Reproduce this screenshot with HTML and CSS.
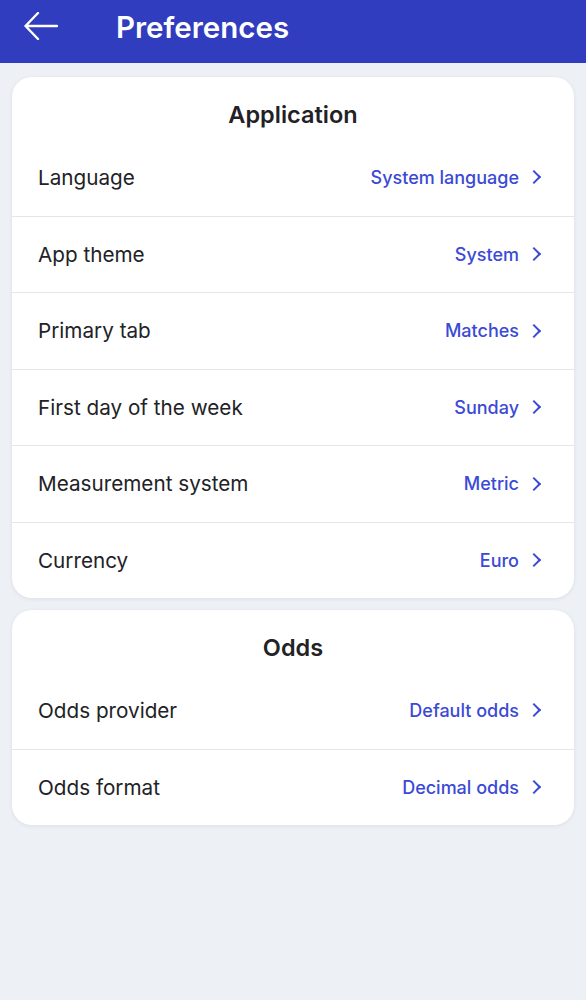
FILE: index.html
```html
<!DOCTYPE html>
<html>

<head>
  <meta charset="utf-8">
  <meta name="viewport" content="width=device-width">
  <title>Preferences</title>
  <link rel="stylesheet" href="styles.css">
</head>

<body>
  <header class="topbar">
    <svg class="back" width="34" height="28" viewBox="0 0 34 28">
      <path d="M14 1 L1.5 14 L14 27 M1.5 14 H33" fill="none" stroke="#fff" stroke-width="2.4" stroke-linecap="round" stroke-linejoin="round"/>
    </svg>
    <h1>Preferences</h1>
  </header>

  <main class="content">
    <section class="card">
      <h2>Application</h2>
      <div class="row"><span class="label">Language</span><span class="value">System language</span><span class="chev"></span></div>
      <div class="row"><span class="label">App theme</span><span class="value">System</span><span class="chev"></span></div>
      <div class="row"><span class="label">Primary tab</span><span class="value">Matches</span><span class="chev"></span></div>
      <div class="row"><span class="label">First day of the week</span><span class="value">Sunday</span><span class="chev"></span></div>
      <div class="row"><span class="label">Measurement system</span><span class="value">Metric</span><span class="chev"></span></div>
      <div class="row"><span class="label">Currency</span><span class="value">Euro</span><span class="chev"></span></div>
    </section>

    <section class="card">
      <h2>Odds</h2>
      <div class="row"><span class="label">Odds provider</span><span class="value">Default odds</span><span class="chev"></span></div>
      <div class="row"><span class="label">Odds format</span><span class="value">Decimal odds</span><span class="chev"></span></div>
    </section>
  </main>
</body>
</html>
```

FILE: styles.css
```css
body {
  margin: 0;
  background-color: #edf0f5;
  font-family: Inter, "Noto Sans", sans-serif;
  color: #222226;
  min-height: 1000px;
}

.topbar {
  height: 63px;
  background-color: #303dbe;
  display: flex;
  align-items: center;
  padding-left: 24px;
  box-sizing: border-box;
}

.back {
  display: block;
  margin-top: -11px;
}

.topbar h1 {
  margin: -10px 0 0 58px;
  color: #fff;
  font-size: 29.5px;
  font-weight: 600;
}

.content {
  padding: 14px 12px;
  display: flex;
  flex-direction: column;
  gap: 12px;
}

.card {
  background-color: #fff;
  border-radius: 20px;
  box-shadow: 0 1px 4px rgba(30, 40, 80, 0.08);
  overflow: hidden;
}

.card h2 {
  margin: 0;
  height: 62px;
  line-height: 76px;
  font-size: 23.5px;
  font-weight: 600;
  text-align: center;
}

.row {
  height: 76.5px;
  display: flex;
  align-items: center;
  padding: 0 32px 0 26px;
  box-sizing: border-box;
}

.row + .row {
  border-top: 1px solid #e4e6ea;
}

.label {
  flex: 1;
  font-size: 20.7px;
}

.value {
  color: #3b4ad6;
  font-size: 18px;
  font-weight: 500;
}

.chev {
  width: 8px;
  height: 8px;
  margin-left: 10px;
  margin-right: 3px;
  border-top: 2px solid #3b4ad6;
  border-right: 2px solid #3b4ad6;
  transform: rotate(45deg);
}
```
